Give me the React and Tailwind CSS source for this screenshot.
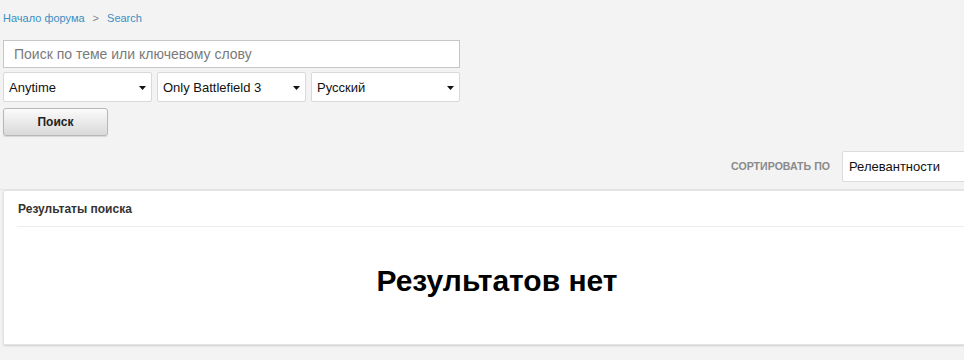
import React from "react";

function Caret() {
  return (
    <svg width="7" height="4" viewBox="0 0 7 4" className="shrink-0">
      <path d="M0 0h7L3.5 4z" fill="#111" />
    </svg>
  );
}

function FakeSelect({ label, width = "w-[149px]" }) {
  return (
    <div
      className={`${width} h-[30px] flex items-center justify-between pl-[5px] pr-[5px] pt-[2px] bg-white border border-[#d9d9d9] rounded-[2px] text-[13px] text-[#111]`}
    >
      <span>{label}</span>
      <Caret />
    </div>
  );
}

export default function App() {
  return (
    <div
      className="w-[964px] h-[360px] overflow-hidden bg-[#f3f3f3] pl-[3px]"
      style={{ fontFamily: '"Liberation Sans", Arial, sans-serif' }}
    >
      {/* Breadcrumb */}
      <div className="pt-[11px] h-[40px] text-[11px] leading-[14px] text-[#3b8ec2] flex">
        <span>Начало форума</span>
        <span className="mx-[8px] text-[#888]">&gt;</span>
        <span>Search</span>
      </div>

      {/* Search form */}
      <div className="w-[457px] h-[28px] bg-white border border-[#c6c6c6] flex items-center pl-[10px] text-[14px] text-[#7a7a7a]">
        Поиск по теме или ключевому слову
      </div>
      <div className="mt-[4px] flex gap-[5px]">
        <FakeSelect label="Anytime" />
        <FakeSelect label="Only Battlefield 3" />
        <FakeSelect label="Русский" />
      </div>
      <button className="mt-[6px] w-[105px] h-[28px] border border-[#b8b8b8] rounded-[3px] bg-gradient-to-b from-[#fbfbfb] to-[#d9d9d9] text-[12px] font-bold text-[#222] shadow-[0_1px_1px_rgba(0,0,0,0.12)]">
        Поиск
      </button>

      {/* Sort */}
      <div className="mt-[15px] flex justify-end items-center gap-[12px] mr-[-31px]">
        <span className="text-[10.6px] font-bold text-[#8a8a8a]">СОРТИРОВАТЬ ПО</span>
        <div className="w-[153px] h-[31px] flex items-center pl-[6px] bg-white border border-[#dcdcdc] rounded-[2px] text-[13px] text-[#111]">
          Релевантности
        </div>
      </div>

      <div className="mt-[7px] ml-[-3px] h-px bg-[#e6e6e6]" />

      {/* Results card */}
      <div className="w-[988px] h-[155px] bg-white border border-[#e3e3e3] rounded-[2px] shadow-[0_1px_2px_rgba(0,0,0,0.15)]">
        <div className="ml-[13px] pl-[1px] pt-[9px] h-[36px] border-b border-[#ececec] text-[12px] font-bold text-[#333]">
          Результаты поиска
        </div>
        <div className="pt-[37px] text-center text-[30px] font-bold text-black leading-[34px]">
          Результатов нет
        </div>
      </div>
    </div>
  );
}
